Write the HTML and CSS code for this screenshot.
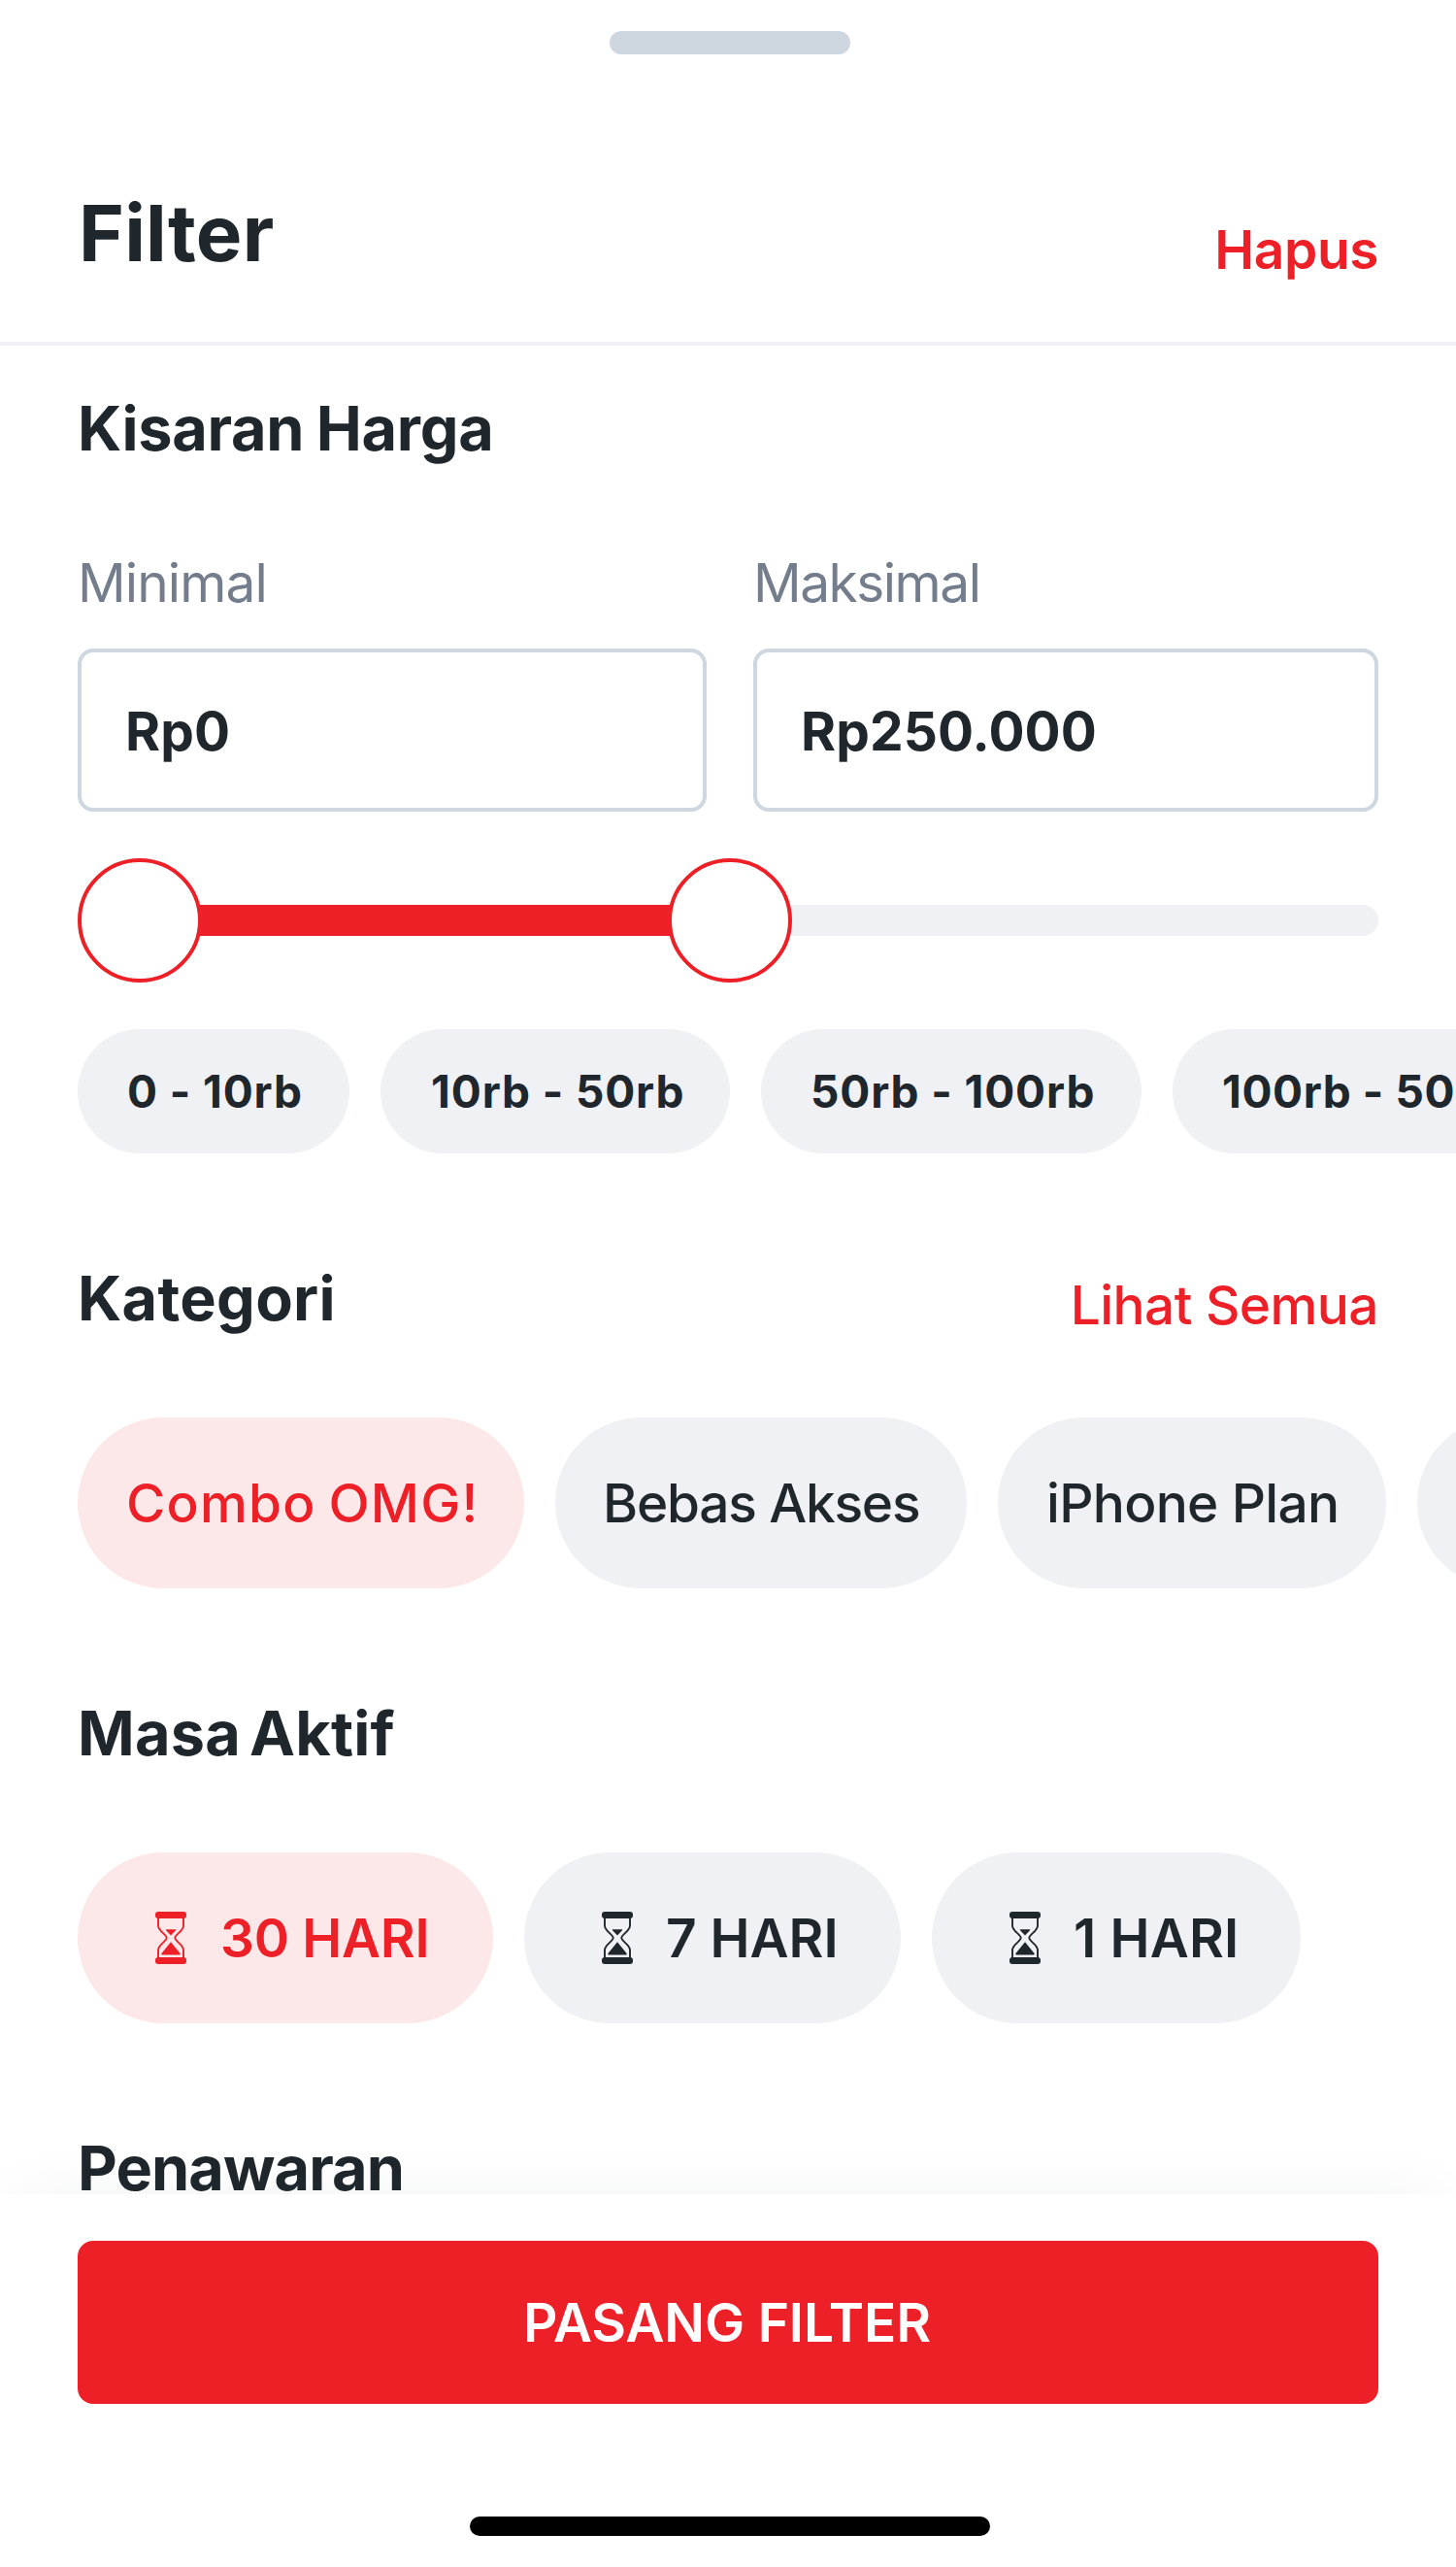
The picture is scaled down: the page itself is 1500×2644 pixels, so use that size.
FILE: index.html
```html
<!DOCTYPE html>
<html lang="id">
<head>
<meta charset="utf-8">
<title>Filter</title>
<link rel="stylesheet" href="styles.css">
</head>
<body>
<svg class="sprite" aria-hidden="true">
  <symbol id="hourglass" viewBox="0 0 32 54">
    <rect x="0" y="0" width="32" height="7" rx="3" fill="currentColor"/>
    <rect x="0" y="47" width="32" height="7" rx="3" fill="currentColor"/>
    <path d="M3 6V14.500C3 20 11.700 23.500 11.700 27S3 34 3 39.500V48M29 6V14.500C29 20 20.300 23.500 20.300 27S29 34 29 39.500V48" fill="none" stroke="currentColor" stroke-width="1.900"/>
    <path d="M11.500 18.200H20.500Q21.800 18.400 21 19.300L16 24.600L11 19.300Q10.200 18.400 11.500 18.200ZM16 31.300L25.600 43Q26.200 44.400 25 44.500H7Q5.800 44.400 6.400 43Z" fill="currentColor"/>
  </symbol>
</svg>
<div class="sheet">
  <header class="header">
    <div class="grabber"></div>
    <div class="header-row">
      <h1 class="title">Filter</h1>
      <a class="clear">Hapus</a>
    </div>
  </header>

  <main class="content">
    <section class="price">
      <h2 class="heading">Kisaran Harga</h2>
      <div class="fields">
        <label class="field field-min">
          <span class="field-label">Minimal</span>
          <span class="field-box">Rp0</span>
        </label>
        <label class="field field-max">
          <span class="field-label">Maksimal</span>
          <span class="field-box">Rp250.000</span>
        </label>
      </div>
      <div class="slider">
        <span class="thumb"></span>
        <span class="range"></span>
        <span class="thumb"></span>
        <span class="rest"></span>
      </div>
      <div class="chips chips-price">
        <span class="chip p1">0 - 10rb</span>
        <span class="chip p2">10rb - 50rb</span>
        <span class="chip p3">50rb - 100rb</span>
        <span class="chip p4">100rb - 50</span>
      </div>
    </section>

    <section class="category">
      <div class="heading-row">
        <h2 class="heading kategori">Kategori</h2>
        <a class="see-all">Lihat Semua</a>
      </div>
      <div class="chips chips-category">
        <span class="chip active c1">Combo OMG!</span>
        <span class="chip c2">Bebas Akses</span>
        <span class="chip c3">iPhone Plan</span>
        <span class="chip c4"></span>
      </div>
    </section>

    <section class="duration">
      <h2 class="heading masa">Masa Aktif</h2>
      <div class="chips chips-duration">
        <span class="chip active d1"><svg class="icon"><use href="#hourglass"/></svg>30 HARI</span>
        <span class="chip d2"><svg class="icon"><use href="#hourglass"/></svg>7 HARI</span>
        <span class="chip d3"><svg class="icon"><use href="#hourglass"/></svg>1 HARI</span>
      </div>
    </section>

    <section class="offer">
      <h2 class="heading penawaran">Penawaran</h2>
    </section>
  </main>

  <footer class="footer">
    <button class="apply">PASANG FILTER</button>
    <div class="home-indicator"></div>
  </footer>
</div>
</body>
</html>
```
FILE: styles.css
```css
* {
  box-sizing: border-box;
}

body {
  margin: 0;
  background: #fff;
  color: #1f272d;
  font-family: "Inter", "Liberation Sans", sans-serif;
}

.sprite {
  display: none;
}

.sheet {
  display: flex;
  flex-direction: column;
  width: 1500px;
  height: 2644px;
  overflow: hidden;
}

.header {
  flex: none;
  height: 356px;
  padding-top: 32px;
  border-bottom: 4px solid #f0f1f5;
}

.grabber {
  width: 248px;
  height: 24px;
  margin: 0 auto;
  border-radius: 12px;
  background: #ced6e0;
  transform: translateX(2px);
}

.header-row {
  display: flex;
  justify-content: space-between;
  align-items: flex-start;
  padding: 144px 80px 0 81px;
}

.title {
  margin: 0;
  font-size: 80px;
  line-height: 80px;
  font-weight: 650;
  letter-spacing: 0.2px;
}

.clear {
  padding-top: 17px;
  color: #ed2028;
  font-size: 55px;
  line-height: 80px;
  font-weight: 600;
  letter-spacing: -0.4px;
}

.content {
  flex: 1;
  min-height: 0;
  padding: 53px 80px 0;
}

.heading {
  margin: 0;
  font-size: 63px;
  line-height: 64px;
  font-weight: 650;
  letter-spacing: -0.3px;
  word-spacing: -2px;
}

.kategori {
  letter-spacing: 0.3px;
}

.masa {
  letter-spacing: 0.2px;
  word-spacing: -6px;
}

.penawaran {
  letter-spacing: -0.9px;
}

.fields {
  display: flex;
  gap: 48px;
  margin-top: 95px;
}

.field {
  display: flex;
  flex-direction: column;
  gap: 36px;
}

.field-min {
  width: 648px;
}

.field-max {
  width: 644px;
}

.field-label {
  color: #747d8c;
  font-size: 55px;
  line-height: 64px;
  letter-spacing: -0.9px;
}

.field-max .field-label {
  letter-spacing: -1.5px;
}

.field-box {
  height: 168px;
  padding-left: 45px;
  border: 4px solid #ced6e0;
  border-radius: 16px;
  font-size: 55px;
  line-height: 162px;
  font-weight: 650;
  letter-spacing: 0.1px;
}

.slider {
  display: flex;
  align-items: center;
  height: 128px;
  margin-top: 48px;
}

.thumb {
  flex: none;
  width: 128px;
  height: 128px;
  border: 4px solid #ed2028;
  border-radius: 50%;
  background: #fff;
  z-index: 1;
}

.range {
  width: 488px;
  height: 32px;
  margin: 0 -4px;
  background: #ed2028;
}

.rest {
  flex: 1;
  height: 32px;
  margin-left: -4px;
  border-radius: 0 16px 16px 0;
  background: #f0f1f5;
}

.chips {
  display: flex;
  gap: 32px;
}

.chip {
  display: flex;
  flex: none;
  align-items: center;
  height: 176px;
  padding-left: 50px;
  border-radius: 88px;
  background: #f0f1f5;
  font-size: 55px;
  font-weight: 500;
  white-space: nowrap;
}

.active {
  background: #fde8e9;
  color: #ed2028;
}

.chips-price {
  margin-top: 48px;
}

.chips-price .chip {
  height: 128px;
  padding-left: 51px;
  font-size: 46px;
  font-weight: 650;
  letter-spacing: 0.9px;
}

.chips-price .p1 {
  width: 280px;
}

.chips-price .p2 {
  width: 360px;
  padding-left: 52px;
}

.chips-price .p3 {
  width: 392px;
}

.chips-price .p4 {
  width: 424px;
  letter-spacing: 0.6px;
}

.category {
  margin-top: 117px;
}

.heading-row {
  display: flex;
  justify-content: space-between;
}

.see-all {
  padding-top: 7px;
  color: #ed2028;
  font-size: 55px;
  line-height: 64px;
  font-weight: 500;
  letter-spacing: -0.58px;
}

.chips-category {
  margin-top: 84px;
}

.c1 {
  width: 460px;
  letter-spacing: 1.2px;
  word-spacing: -3px;
}

.c2 {
  width: 424px;
  padding-left: 49px;
  letter-spacing: -1.22px;
}

.c3 {
  width: 400px;
  letter-spacing: -0.69px;
}

.c4 {
  width: 400px;
}

.duration,
.offer {
  margin-top: 117px;
}

.chips-duration {
  margin-top: 91px;
}

.chips-duration .chip {
  gap: 34px;
  padding-left: 80px;
  font-weight: 600;
}

.icon {
  width: 32px;
  height: 54px;
}

.chips-duration .d1 {
  width: 428px;
  gap: 35px;
  letter-spacing: -0.27px;
}

.d2 {
  width: 388px;
}

.d3 {
  width: 380px;
  letter-spacing: 0.2px;
}

.footer {
  position: relative;
  flex: none;
  height: 384px;
  padding: 48px 80px 0;
  background: #fff;
  box-shadow: 0 -8px 64px -24px rgba(31, 60, 50, 0.1);
}

.apply {
  display: block;
  width: 100%;
  height: 168px;
  padding: 0 2px 0 0;
  border: 0;
  border-radius: 16px;
  background: #ed2028;
  color: #fff;
  font: inherit;
  font-size: 55px;
  font-weight: 600;
  letter-spacing: -0.14px;
}

.home-indicator {
  width: 536px;
  height: 20px;
  margin: 116px auto 0;
  border-radius: 10px;
  background: #000;
  transform: translateX(2px);
}
```
